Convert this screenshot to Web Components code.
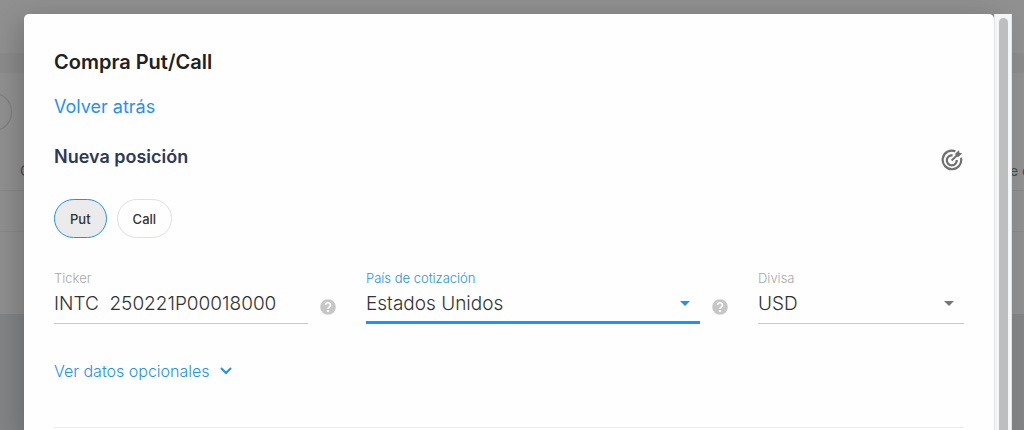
<!DOCTYPE html>
<html lang="es">
<head>
<meta charset="utf-8">
<meta name="viewport" content="width=device-width, initial-scale=1">
<title>Compra Put/Call</title>
<style>
  html, body { margin: 0; min-height: 100vh; }
  body {
    font-family: Inter, "Liberation Sans", sans-serif;
    color: #212121;
    background: #8b8b8b;
    position: relative;
    overflow: hidden;
  }
</style>
</head>
<body>
<page-backdrop></page-backdrop>
<modal-dialog heading="Compra Put/Call">
  <position-form></position-form>
</modal-dialog>

<script>
  const mount = (el, html) => {
    el.attachShadow({ mode: 'open' }).innerHTML = html;
    return el.shadowRoot;
  };

  /* Dimmed page underneath the dialog */
  class PageBackdrop extends HTMLElement {
    connectedCallback() {
      mount(this, `
        <style>
          :host { position: absolute; inset: 0; overflow: hidden; display: flex; flex-direction: column; background: #838485; color: #4c4c4c; font-size: 14px; }
          .top { height: 191px; box-sizing: border-box; background: #909090; border-bottom: 1px solid #888; display: flex; flex-direction: column; }
          .bar { height: 20px; margin-top: 53px; background: #8b8b8b; }
          .circle { width: 34px; height: 36px; margin: 20px 0 0 -24px; border: 1px solid #7b7b7b; border-radius: 50%; }
          .heads { display: flex; justify-content: space-between; padding-left: 20px; margin-top: 30px; line-height: 20px; white-space: pre; }
          .last { width: 14px; }
          .row { height: 40px; background: #8f8f8f; border-bottom: 1px solid #888; }
          .rest { height: 82px; background: #8f8f8f; }
        </style>
        <div class="top">
          <div class="bar"></div>
          <div class="circle"></div>
          <div class="heads"><span>C</span><span class="last">e c</span></div>
        </div>
        <div class="row"></div>
        <div class="rest"></div>`);
    }
  }

  class ModalDialog extends HTMLElement {
    connectedCallback() {
      mount(this, `
        <style>
          :host { display: flex; position: relative; box-sizing: border-box; min-height: 100vh; padding: 14px 12px 0 24px; }
          section { flex: 1; min-width: 0; box-sizing: border-box; padding: 34px 30px 0; background: #fefefe; border-radius: 5px 5px 0 0; box-shadow: 0 10px 28px 4px rgba(0,0,0,.22); }
          h1 { margin: 0; font-size: 20px; line-height: 28px; font-weight: 600; color: #212121; }
          .track { position: relative; width: 18px; box-sizing: border-box; padding: 4px 3px 0 4px; display: flex; background: #f4f5f6; border: solid #e4e4e4; border-width: 0 1px; }
          .thumb { flex: 1; background: #bebebe; border-radius: 5px 5px 0 0; }
        </style>
        <section role="dialog" aria-labelledby="title">
          <h1 id="title">${this.getAttribute('heading')}</h1>
          <slot></slot>
        </section>
        <div class="track" aria-hidden="true"><div class="thumb"></div></div>`);
    }
  }

  class TargetIcon extends HTMLElement {
    connectedCallback() {
      mount(this, `
        <style>:host { display: block; width: 22px; height: 22px; } svg { display: block; }</style>
        <svg width="22" height="22" viewBox="0 0 22 22" fill="none" stroke="#707070" stroke-width="2.200" aria-hidden="true">
          <path d="M14.400 2.300A9.300 9.300 0 1 0 20 8.800"/>
          <path d="M11.600 6.400A5 5 0 1 0 15.800 11"/>
          <path d="M10.600 11.500 17 5.500" stroke-width="1.900"/>
          <path d="M14.300 4.600 18 1.200l.4 2.600 2.800.5-3.600 3.400-2.900-.3Z" fill="#707070" stroke="none"/>
        </svg>`);
    }
  }

  class HelpHint extends HTMLElement {
    connectedCallback() {
      mount(this, `
        <style>
          :host { display: block; width: 16px; }
          button { display: block; width: 16px; height: 16px; padding: 0; border: 0; background: none; }
          svg { display: block; }
        </style>
        <button type="button" aria-label="Ayuda">
          <svg width="16" height="16" viewBox="0 0 16 16" aria-hidden="true">
            <circle cx="8" cy="8" r="7.8" fill="#c6c6c6"/>
            <path d="M5.600 6.100a2.400 2.300 0 1 1 3.700 1.900C8.400 8.600 8 9 8 10" fill="none" stroke="#fff" stroke-width="1.700"/>
            <rect x="7" y="11" width="2" height="2" fill="#fff"/>
          </svg>
        </button>`);
    }
  }

  /* Rounded option; "selected" marks the active one */
  class PillButton extends HTMLElement {
    connectedCallback() {
      const on = this.hasAttribute('selected');
      mount(this, `
        <style>
          :host { display: block; }
          button { display: block; height: 39px; padding: 0 15px; border: 1px solid #e0e0e0; border-radius: 20px; background: #fefefe; color: #333; font: 500 13px/20px Inter, "Liberation Sans", sans-serif; }
          button[aria-pressed="true"] { background: #ebebeb; border-color: #1e90ff; }
        </style>
        <button type="button" aria-pressed="${on}"><slot></slot></button>`);
    }
  }

  /* Underlined field: text box, or drop-down when "select" is set */
  class LineField extends HTMLElement {
    connectedCallback() {
      const value = this.getAttribute('value');
      const select = this.hasAttribute('select');
      const control = select
        ? `<select id="f"><option selected>${value}</option></select>
           <svg width="10" height="5" viewBox="0 0 10 5" aria-hidden="true"><path d="M0 0h10L5 5Z" fill="currentColor"/></svg>`
        : `<input id="f" type="text" value="${value}">`;
      mount(this, `
        <style>
          :host { display: flex; min-width: 0; gap: 12px; align-items: flex-end; }
          .field { flex: 1; min-width: 0; }
          label { display: block; font-size: 13px; line-height: 16px; font-weight: 300; color: #a8a8a8; }
          .line { display: flex; align-items: center; box-sizing: border-box; height: 38px; padding: 0 10px 2px 0; border-bottom: 1px solid #cacaca; color: #757575; }
          input, select { flex: 1; min-width: 0; height: 34px; margin: 0; padding: 0; border: 0; outline: 0; background: none; appearance: none; color: #333; font: 300 19px/34px Inter, "Liberation Sans", sans-serif; }
          ::slotted(help-hint) { margin-bottom: 9px; }
          :host([active]) label { color: #1e90ff; }
          :host([active]) .line { color: #1e90ff; box-shadow: inset 0 -2px #1e90ff; border-color: #1e90ff; }
        </style>
        <div class="field">
          <label for="f">${this.getAttribute('label')}</label>
          <div class="line">${control}</div>
        </div>
        <slot></slot>`);
    }
  }

  class PositionForm extends HTMLElement {
    connectedCallback() {
      mount(this, `
        <style>
          :host { display: block; }
          a { color: #1e90ff; text-decoration: none; }
          .back { display: block; margin-top: 17px; font-size: 18px; line-height: 28px; }
          header { display: flex; align-items: flex-end; justify-content: space-between; margin-top: 22px; padding-right: 1px; }
          h2 { margin: 0; font-size: 18px; line-height: 28px; font-weight: 600; color: #2f3857; }
          .pills { display: flex; gap: 10px; margin-top: 28px; }
          .fields { display: grid; grid-template-columns: 282fr 362fr 206fr; gap: 30px; margin-top: 32px; }
          .more { display: inline-flex; align-items: center; gap: 10px; margin-top: 35px; font-size: 16px; line-height: 24px; font-weight: 300; }
          hr { margin: 44px 0 0; border: 0; border-top: 1px solid #ebebeb; }
        </style>
        <a class="back" href="#">Volver atrás</a>
        <header><h2>Nueva posición</h2><target-icon></target-icon></header>
        <div class="pills">
          <pill-button selected>Put</pill-button>
          <pill-button>Call</pill-button>
        </div>
        <div class="fields">
          <line-field label="Ticker" value="INTC  250221P00018000"><help-hint></help-hint></line-field>
          <line-field label="País de cotización" value="Estados Unidos" select active><help-hint></help-hint></line-field>
          <line-field label="Divisa" value="USD" select></line-field>
        </div>
        <a class="more" href="#">Ver datos opcionales
          <svg width="12" height="8" viewBox="0 0 12 8" fill="none" stroke="currentColor" stroke-width="2" aria-hidden="true"><path d="m1 1 5 5 5-5"/></svg>
        </a>
        <hr>`);
    }
  }

  customElements.define('page-backdrop', PageBackdrop);
  customElements.define('modal-dialog', ModalDialog);
  customElements.define('target-icon', TargetIcon);
  customElements.define('help-hint', HelpHint);
  customElements.define('pill-button', PillButton);
  customElements.define('line-field', LineField);
  customElements.define('position-form', PositionForm);
</script>
</body>
</html>
